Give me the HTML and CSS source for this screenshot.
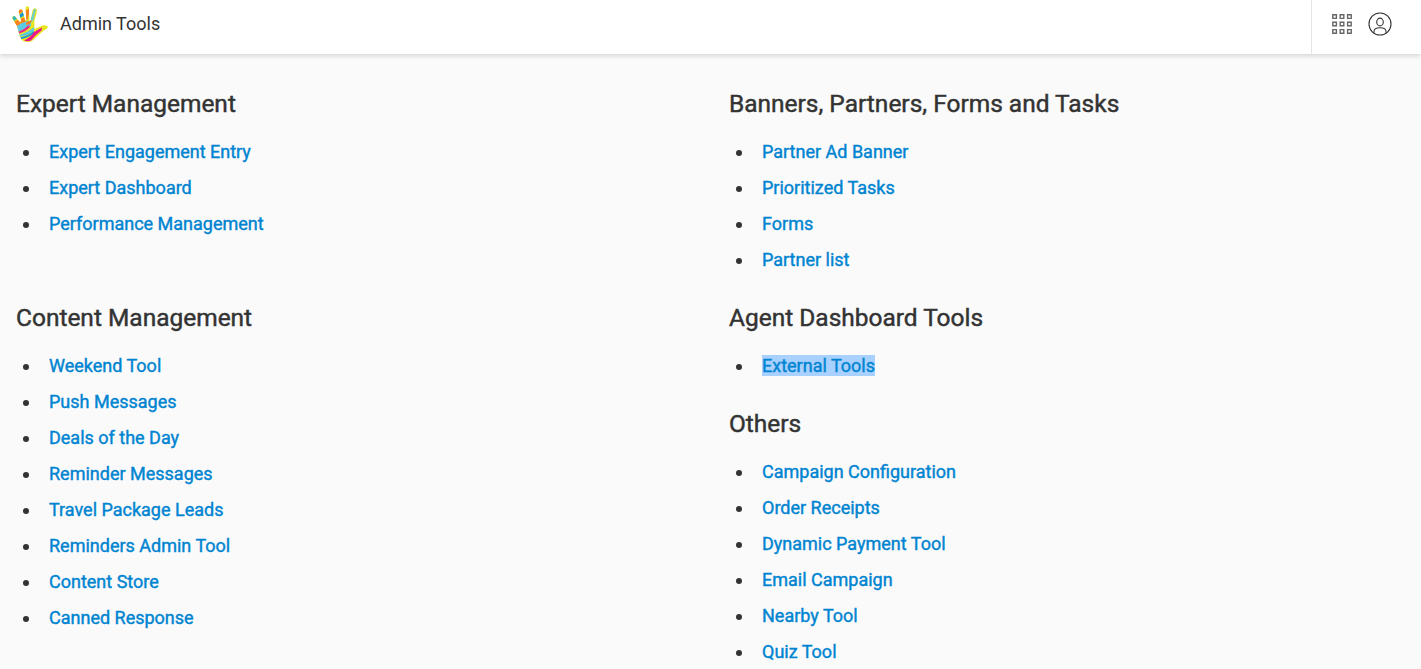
FILE: index.html
```html
<!DOCTYPE html>
<html lang="en">
<head>
<meta charset="utf-8">
<title>Admin Tools</title>
<link rel="stylesheet" href="styles.css">
</head>
<body>
<header class="topbar">
  <svg class="logo" viewBox="12 5 36 38" width="36" height="38">
    <defs>
      <clipPath id="hand"><path d="M17 26L12.3 18.5Q12 15.8 14.6 16L19.8 22L21.2 21L18.6 11.5Q19.8 7.8 22.4 10.3L25.2 21L26.4 20L25.5 8Q26.5 5 29 7L29.3 21L30.5 21L32.6 10Q34.5 6.7 36.8 9.3Q37.4 12 34.4 20.5L34.5 29L42.5 25.4Q46.5 24.8 48 26.8Q47.6 28.7 43.2 31Q38.5 35 32 41Q27.5 43.2 23 41Q19.7 38 18.5 31.5Z"/></clipPath>
    </defs>
    <g clip-path="url(#hand)">
      <rect x="12" y="5" width="36" height="38" fill="#e6e51f"/>
      <path d="M12 17L16 15L18 18L14 21Z" fill="#35b6b0"/>
      <path d="M14 22L19 19L22 27L16 28Z" fill="#f58220"/>
      <path d="M18 10L23 9L24 11L19 14Z" fill="#f58220"/>
      <path d="M19 15L23 12L25 15L20 18Z" fill="#1598d4"/>
      <path d="M20 19L25 17L26 22L21 24Z" fill="#f58220"/>
      <path d="M25 11L30 8L28 19L25 21Z" fill="#f58220"/>
      <path d="M34 9L36 9L33.5 20L30 24L31 18Z" fill="#70cfc0"/>
      <path d="M17 26Q23 22 31 20L31 26L18 32Z" fill="#5bcbe3"/>
      <path d="M26 23Q29 20 32 20L30 24L26 25Z" fill="#f58220"/>
      <path d="M18 32Q24 30 29 25L30 27Q25 32 19 33.5Z" fill="#ec268f"/>
      <path d="M19 35Q27 33 34 27V31Q28 35.5 20 36.5Z" fill="#5bcbe3"/>
      <path d="M20 37.5Q28 36 34 31L34 33Q28 38 21 39.2Z" fill="#1598d4"/>
      <path d="M24 40.5Q30 38 34 32L42 27.5L41.5 30.5Q35 35 31 40.5Q28 42 24 40.5Z" fill="#ec168c"/>
    </g>
  </svg>
  <span class="title">Admin Tools</span>
  <nav class="actions">
    <svg class="apps" width="20" height="20" viewBox="0 0 20 20" fill="none" stroke="#666" stroke-width="1.4">
      <path d="M.8.8h3.6v3.6H.8zM8.2.8h3.6v3.6H8.2zM15.6.8h3.6v3.6h-3.6zM.8 8.2h3.6v3.6H.8zM8.2 8.2h3.6v3.6H8.2zM15.6 8.2h3.6v3.6h-3.6zM.8 15.6h3.6v3.6H.8zM8.2 15.6h3.6v3.6H8.2zM15.6 15.6h3.6v3.6h-3.6z"/>
    </svg>
    <svg class="user" width="24" height="24" viewBox="0 0 24 24" fill="none" stroke="#333" stroke-width="1.1"><circle cx="12" cy="12" r="11"/><ellipse cx="12" cy="10" rx="3.3" ry="3.9"/><path d="M6 20.8v-1.3c0-2.4 2.4-3.7 6-3.7s6 1.3 6 3.7v1.3"/></svg>
  </nav>
</header>
<main class="columns">
  <div class="column">
    <section class="group group-first"><h2>Expert Management</h2><ul>
      <li><a>Expert Engagement Entry</a></li><li><a>Expert Dashboard</a></li><li><a>Performance Management</a></li></ul></section>
    <section class="group"><h2>Content Management</h2><ul>
      <li><a>Weekend Tool</a></li><li><a>Push Messages</a></li><li><a>Deals of the Day</a></li><li><a>Reminder Messages</a></li><li><a>Travel Package Leads</a></li><li><a>Reminders Admin Tool</a></li><li><a>Content Store</a></li><li><a>Canned Response</a></li></ul></section>
  </div>
  <div class="column">
    <section class="group group-first"><h2>Banners, Partners, Forms and Tasks</h2><ul>
      <li><a>Partner Ad Banner</a></li><li><a>Prioritized Tasks</a></li><li><a>Forms</a></li><li><a>Partner list</a></li></ul></section>
    <section class="group"><h2>Agent Dashboard Tools</h2><ul>
      <li><a class="selected">External Tools</a></li></ul></section>
    <section class="group"><h2>Others</h2><ul>
      <li><a>Campaign Configuration</a></li><li><a>Order Receipts</a></li><li><a>Dynamic Payment Tool</a></li><li><a>Email Campaign</a></li><li><a>Nearby Tool</a></li><li><a>Quiz Tool</a></li></ul></section>
  </div>
</main>
</body>
</html>
```
FILE: styles.css
```css
* { box-sizing: border-box; }
body { margin: 0; height: 669px; overflow: hidden; background: #fafafa; color: #333; font-family: Roboto, sans-serif; }
.topbar { display: flex; align-items: center; height: 54px; padding-left: 12px; background: #fff; box-shadow: 0 2px 5px rgba(0,0,0,.15); }
.logo { margin-bottom: 6px; }
.title { margin: 0 0 6px 12px; font-size: 18px; line-height: 24px; }
.actions { display: flex; gap: 16px; width: 110px; height: 54px; margin-left: auto; padding: 12px 0 0 20px; border-left: 1px solid #e6e6e6; }
.apps { margin-top: 2px; }
.columns { display: grid; grid-template-columns: 713px 1fr; padding: 32px 0 0 16px; }
.group { padding-bottom: 22px; }
.group-first { height: 214px; }
.group h2 { margin: 0 0 12px; font-size: 24.48px; line-height: 36px; font-weight: 400; -webkit-text-stroke: .45px; }
.group ul { margin: 0; padding: 0 0 0 25px; }
.group li { padding-left: 8px; font-size: 18px; line-height: 36px; }
.group a { color: #0084d1; font-weight: 400; -webkit-text-stroke: .4px; }
.group .selected { background: #a8d1ff; }
```
